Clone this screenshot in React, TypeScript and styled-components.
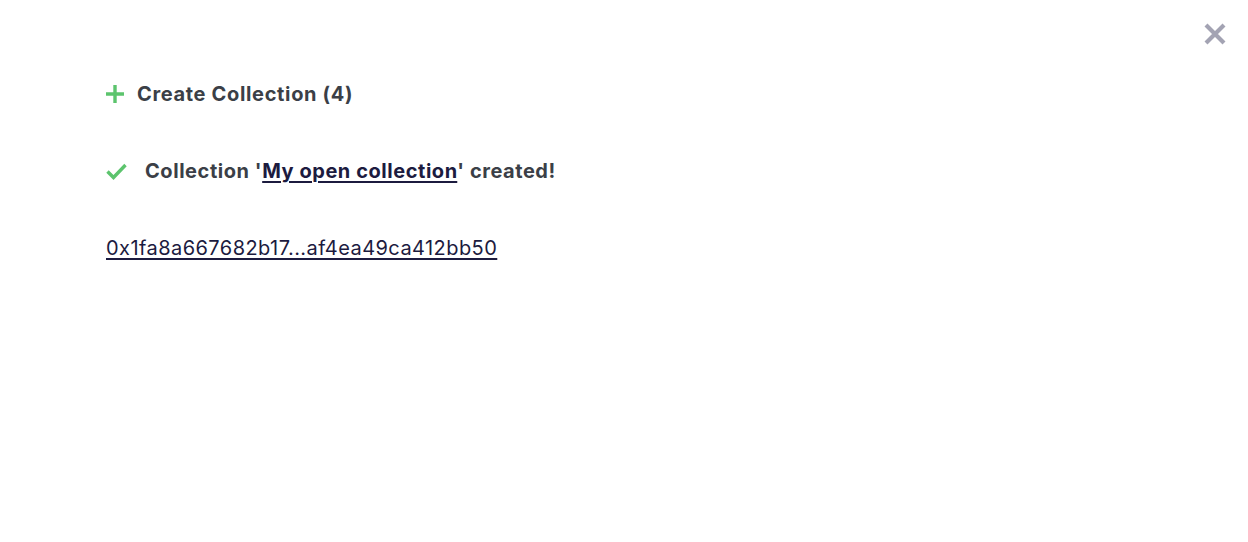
import React from "react";
import styled, { createGlobalStyle } from "styled-components";

const Global = createGlobalStyle`
  html, body { margin: 0; padding: 0; background: #ffffff; }
  body { font-family: Inter, "Noto Sans", sans-serif; }
`;

const Page = styled.div`
  position: relative;
  width: 1248px;
  height: 542px;
  box-sizing: border-box;
  padding: 80px 0 0 106px;
  display: flex;
  flex-direction: column;
`;

const CloseButton = styled.button`
  position: absolute;
  top: 21px;
  right: 20px;
  width: 26px;
  height: 26px;
  padding: 0;
  border: none;
  background: none;
  cursor: pointer;
  display: flex;
  align-items: center;
  justify-content: center;
`;

const Row = styled.div<{ $gap: number; $mt: number }>`
  display: flex;
  align-items: center;
  gap: ${(p) => p.$gap}px;
  margin-top: ${(p) => p.$mt}px;
  height: 28px;
`;

const Title = styled.h2`
  margin: 0;
  font-size: 20px;
  font-weight: 700;
  color: #3b3f47;
  letter-spacing: 0.66px;
`;

const Message = styled.p`
  margin: 0;
  font-size: 20px;
  font-weight: 700;
  color: #3b3f47;
  letter-spacing: 0.55px;
`;

const NameLink = styled.a`
  color: #1c1b3f;
  text-decoration: underline;
  text-underline-offset: 3px;
`;

const HashLink = styled.a`
  margin-top: 49px;
  align-self: flex-start;
  font-size: 20px;
  font-weight: 400;
  color: #1c1b3f;
  text-decoration: underline;
  text-underline-offset: 3px;
  letter-spacing: 0.44px;
  line-height: 28px;
`;

export default function App() {
  return (
    <>
      <Global />
      <Page>
        <CloseButton aria-label="Close">
          <svg width="24" height="24" viewBox="0 0 24 24">
            <path d="M3 3 L21 21 M21 3 L3 21" stroke="#a3a3b3" strokeWidth="4.2" strokeLinecap="butt" />
          </svg>
        </CloseButton>
        <Row $gap={13} $mt={0}>
          <svg width="18" height="18" viewBox="0 0 18 18">
            <path d="M9 0 V18 M0 9 H18" stroke="#5cc46d" strokeWidth="3.4" />
          </svg>
          <Title>Create Collection (4)</Title>
        </Row>
        <Row $gap={18} $mt={49}>
          <svg width="21" height="17" viewBox="0 0 21 17">
            <path d="M1.5 8.5 L7.5 14.5 L19.5 2" stroke="#5cc46d" strokeWidth="3.4" fill="none" />
          </svg>
          <Message>
            Collection '<NameLink href="#">My open collection</NameLink>' created!
          </Message>
        </Row>
        <HashLink href="#">0x1fa8a667682b17...af4ea49ca412bb50</HashLink>
      </Page>
    </>
  );
}
